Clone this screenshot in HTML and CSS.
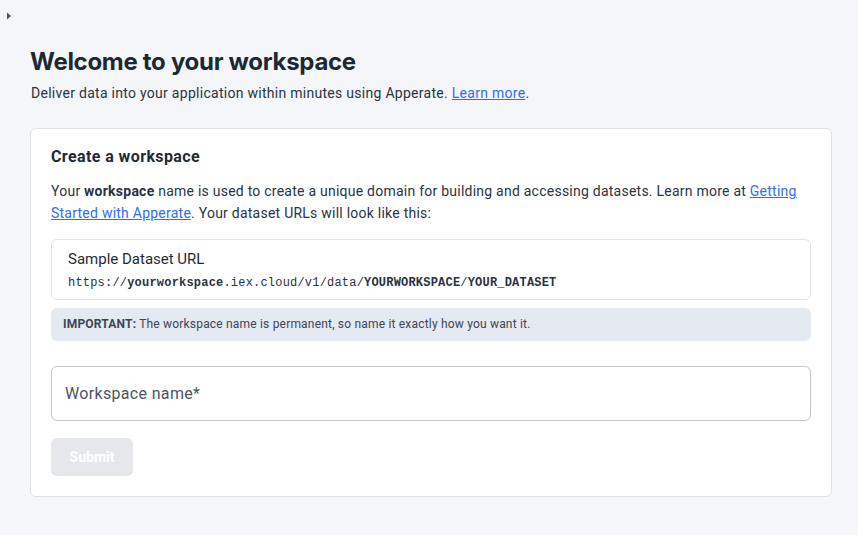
FILE: index.html
```html
<!DOCTYPE html>
<html lang="en">
<head>
<meta charset="utf-8">
<title>Welcome to your workspace</title>
<link rel="stylesheet" href="styles.css">
</head>
<body>
<div class="toggle"><svg width="6" height="8" viewBox="0 0 6 8"><path d="M1 0.5 L5 4 L1 7.5 Z" fill="#4b5563"/></svg></div>
<main class="page">
  <h1 class="title">Welcome to your workspace</h1>
  <p class="lead">Deliver data into your application within minutes using Apperate. <a href="#">Learn more</a>.</p>
  <section class="card">
    <h2 class="card-title">Create a workspace</h2>
    <p class="card-text">Your <b>workspace</b> name is used to create a unique domain for building and accessing datasets. Learn more at <a href="#">Getting Started with Apperate</a>. Your dataset URLs will look like this:</p>
    <div class="sample">
      <div class="sample-label">Sample Dataset URL</div>
      <code class="sample-url">https://<b>yourworkspace</b>.iex.cloud/v1/data/<b>YOURWORKSPACE</b>/<b>YOUR_DATASET</b></code>
    </div>
    <div class="notice"><b>IMPORTANT:</b> The workspace name is permanent, so name it exactly how you want it.</div>
    <div class="field"><span class="placeholder">Workspace name*</span></div>
    <button class="submit" disabled>Submit</button>
  </section>
</main>
</body>
</html>
```
FILE: styles.css
```css
html, body {
  margin: 0;
  padding: 0;
  background: #f5f6f9;
}
body {
  font-family: Roboto, "Liberation Sans", sans-serif;
  color: #1f2a37;
}
.toggle {
  height: 0;
  padding: 12px 0 0 6px;
}
.toggle svg { display: block; }
.page {
  padding: 34px 26px 0 30px;
}
.title {
  margin: 0;
  font-family: Inter, sans-serif;
  font-size: 24px;
  font-weight: 700;
  line-height: 32px;
  letter-spacing: -0.3px;
  color: #1c2935;
}
.lead {
  margin: 4px 0 0 1px;
  font-size: 14px;
  line-height: 22px;
  letter-spacing: 0.28px;
  color: #2a3441;
}
a { color: #2f6fe8; }
.card {
  margin-top: 24px;
  background: #fff;
  border: 1px solid #dfe1e6;
  border-radius: 6px;
  padding: 16px 20px 20px 20px;
}
.card-title {
  margin: 0;
  font-size: 16px;
  font-weight: 700;
  line-height: 24px;
  letter-spacing: 0.4px;
  color: #1f2a37;
}
.card-text {
  margin: 11px 0 0 0;
  font-size: 14px;
  line-height: 22px;
  letter-spacing: 0.24px;
  color: #2a3441;
}
.card-text b { font-weight: 700; }
.sample {
  margin-top: 15px;
  border: 1px solid #e2e4e9;
  border-radius: 6px;
  padding: 9px 16px 7px 16px;
}
.sample-label {
  font-size: 15px;
  line-height: 20px;
  color: #1f2a37;
}
.sample-url {
  display: block;
  margin-top: 5px;
  font-family: "Liberation Mono", monospace;
  font-size: 12px;
  letter-spacing: 0.2px;
  line-height: 18px;
  color: #2a3441;
}
.sample-url b { font-weight: 700; }
.notice {
  margin-top: 8px;
  background: #e5e9f1;
  border-radius: 6px;
  padding: 8px 12px;
  font-size: 12px;
  line-height: 17px;
  letter-spacing: 0.19px;
  color: #3b4654;
}
.notice b { font-weight: 700; }
.field {
  margin-top: 25px;
  height: 53px;
  border: 1px solid #c4c6ca;
  border-radius: 6px;
  display: flex;
  align-items: center;
  padding: 0 13px;
}
.placeholder {
  font-size: 16px;
  letter-spacing: 0.33px;
  color: #4b5563;
}
.submit {
  margin-top: 17px;
  width: 82px;
  height: 38px;
  border: 0;
  border-radius: 6px;
  background: #e5e7eb;
  color: #fff;
  font-family: Roboto, sans-serif;
  font-size: 14px;
  font-weight: 700;
}
```
